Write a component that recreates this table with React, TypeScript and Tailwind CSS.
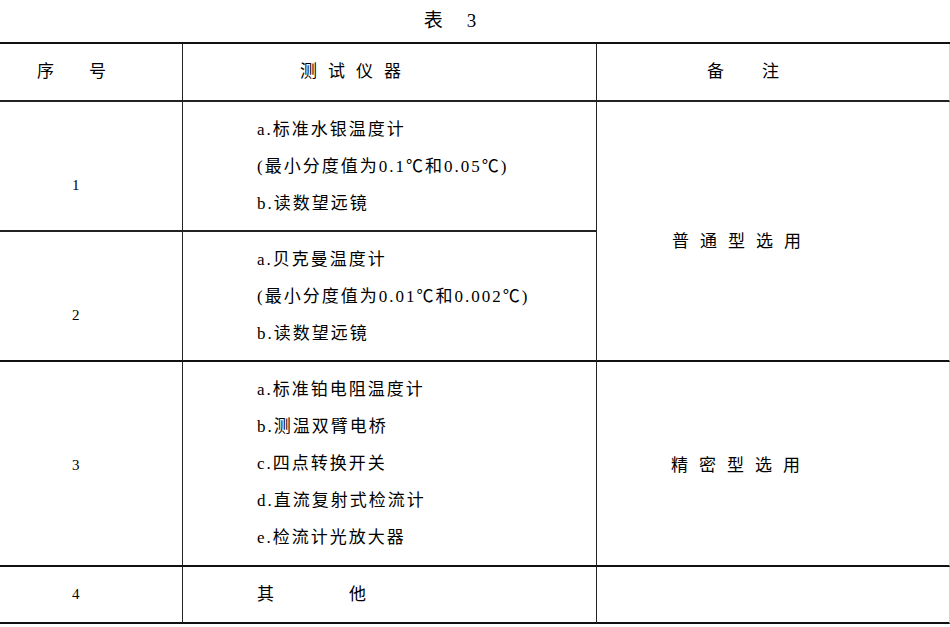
import React from 'react';

const font = "font-['Liberation_Serif','Noto_Sans_CJK_SC',serif]";

const rows1 = ['a.标准水银温度计', '(最小分度值为0.1℃和0.05℃)', 'b.读数望远镜'];
const rows2 = ['a.贝克曼温度计', '(最小分度值为0.01℃和0.002℃)', 'b.读数望远镜'];
const rows3 = ['a.标准铂电阻温度计', 'b.测温双臂电桥', 'c.四点转换开关', 'd.直流复射式检流计', 'e.检流计光放大器'];

const Lines: React.FC<{ items: string[] }> = ({ items }) => (
  <div className="flex flex-col justify-center h-full pl-[74px]">
    {items.map((t, i) => (
      <div key={i} className="leading-[37px] text-[17px] tracking-[2px] whitespace-nowrap">{t}</div>
    ))}
  </div>
);

const App: React.FC = () => {
  return (
    <div className={`w-[950px] h-[627px] bg-white text-black ${font}`}>
      {/* title */}
      <div className="h-[42px] flex items-center justify-center gap-[24px] pr-[50px] text-[19px]">
        <span>表</span>
        <span>3</span>
      </div>

      <div className="grid grid-cols-[183px_414px_1fr] grid-rows-[58px_130px_130px_205px_57px] border-t-2 border-[#111]">
        {/* header */}
        <div className="border-b-2 border-r border-[#222] flex items-center pl-[37px] gap-[35px] text-[17px]">
          <span>序</span>
          <span>号</span>
        </div>
        <div className="border-b-2 border-r border-[#222] flex items-center pl-[117px] text-[17px] tracking-[11px]">
          测试仪器
        </div>
        <div className="border-b-2 border-r border-b-[#222] border-r-gray-300 flex items-center pl-[110px] gap-[38px] text-[17px]">
          <span>备</span>
          <span>注</span>
        </div>

        {/* row 1 */}
        <div className="border-b-2 border-r border-[#222] flex items-center pl-[72px] pt-[38px] text-[15px]">1</div>
        <div className="border-b-2 border-r border-[#222]">
          <Lines items={rows1} />
        </div>
        <div className="row-span-2 border-b-2 border-r border-b-[#111] border-r-gray-300 flex items-center pl-[75px] pt-[22px] text-[17px] tracking-[11px]">
          普通型选用
        </div>

        {/* row 2 */}
        <div className="border-b-2 border-r border-b-[#111] border-r-[#222] flex items-center pl-[72px] pt-[38px] text-[15px]">2</div>
        <div className="border-b-2 border-r border-b-[#111] border-r-[#222]">
          <Lines items={rows2} />
        </div>

        {/* row 3 */}
        <div className="border-b-2 border-r border-b-[#111] border-r-[#222] flex items-center pl-[72px] pt-[4px] text-[15px]">3</div>
        <div className="border-b-2 border-r border-b-[#111] border-r-[#222]">
          <Lines items={rows3} />
        </div>
        <div className="border-b-2 border-r border-b-[#111] border-r-gray-300 flex items-center pl-[74px] pt-[4px] text-[17px] tracking-[11px]">
          精密型选用
        </div>

        {/* row 4 */}
        <div className="border-b-2 border-r border-b-[#111] border-r-[#222] flex items-center pl-[72px] text-[15px]">4</div>
        <div className="border-b-2 border-r border-b-[#111] border-r-[#222] flex items-center pl-[74px] gap-[75px] text-[17px]">
          <span>其</span>
          <span>他</span>
        </div>
        <div className="border-b-2 border-r border-b-[#111] border-r-gray-300"></div>
      </div>
    </div>
  );
};

export default App;
